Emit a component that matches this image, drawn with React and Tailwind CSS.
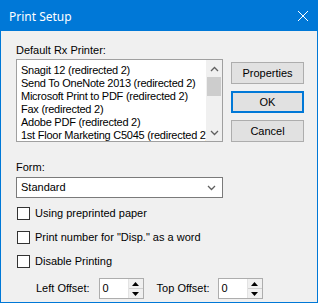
import React from "react";

const printers = [
  "Snagit 12 (redirected 2)",
  "Send To OneNote 2013 (redirected 2)",
  "Microsoft Print to PDF (redirected 2)",
  "Fax (redirected 2)",
  "Adobe PDF (redirected 2)",
  "1st Floor Marketing C5045 (redirected 2)",
];

const Chevron = ({ up }) => (
  <svg width="9" height="6" viewBox="0 0 9 6">
    <path
      d={up ? "M1 5 L4.5 1.5 L8 5" : "M1 1 L4.5 4.5 L8 1"}
      fill="none"
      stroke="#606060"
      strokeWidth="1.3"
    />
  </svg>
);

const CheckRow = ({ label }) => (
  <div className="flex items-center h-[13px] gap-[5px] pl-[1px]">
    <div className="w-[13px] h-[13px] border border-[#333333] bg-white shrink-0"></div>
    <span>{label}</span>
  </div>
);

const Spinner = () => (
  <div className="flex w-[45px] h-[21px] border border-[#adadad] bg-white">
    <div className="flex-1 pl-[3px] leading-[19px]">0</div>
    <div className="w-[15px] flex flex-col border-l border-[#e3e3e3] bg-[#f0f0f0]">
      <div className="flex-1 flex items-center justify-center border-b border-[#d0d0d0]">
        <svg width="7" height="4" viewBox="0 0 7 4">
          <path d="M0 4 L3.5 0 L7 4 Z" fill="#000" />
        </svg>
      </div>
      <div className="flex-1 flex items-center justify-center">
        <svg width="7" height="4" viewBox="0 0 7 4">
          <path d="M0 0 L3.5 4 L7 0 Z" fill="#000" />
        </svg>
      </div>
    </div>
  </div>
);

const Button = ({ children, primary }) => (
  <div
    className={
      "h-[22px] flex items-center justify-center bg-[#e1e1e1] " +
      (primary ? "border-2 border-[#0078d7]" : "border border-[#adadad]")
    }
  >
    {children}
  </div>
);

export default function App() {
  return (
    <div
      className="w-[318px] h-[303px] flex flex-col bg-[#f0f0f0] border border-[#0078d7] text-[11px] leading-[13px] text-black overflow-hidden"
      style={{ fontFamily: '"Liberation Sans", Arial, sans-serif' }}
    >
      {/* Title bar */}
      <div className="h-[30px] shrink-0 bg-[#0078d7] flex items-center justify-between pl-[8px] pr-[9px] text-white">
        <span className="text-[12px]" style={{ fontFamily: '"Noto Sans", sans-serif' }}>
          Print Setup
        </span>
        <svg width="10" height="10" viewBox="0 0 10 10">
          <path d="M0 0 L10 10 M10 0 L0 10" stroke="#fff" strokeWidth="1" />
        </svg>
      </div>

      <div className="flex flex-col pl-[15px] pt-[13px]">
        {/* Printer list + buttons */}
        <div className="flex gap-[8px]">
          <div className="w-[207px] flex flex-col">
            <span>Default Rx Printer:</span>
            <div className="mt-[2px] h-[83px] flex border border-[#a0a0a0] bg-white">
              <div className="flex-1 pl-[4px] pt-[4px] overflow-hidden whitespace-nowrap tracking-[-0.25px]">
                {printers.map((p) => (
                  <div key={p} className="h-[13px]">
                    {p}
                  </div>
                ))}
              </div>
              <div className="w-[16px] flex flex-col bg-[#f0f0f0]">
                <div className="h-[17px] flex items-center justify-center">
                  <Chevron up />
                </div>
                <div className="h-[19px] mx-[1px] bg-[#cdcdcd]"></div>
                <div className="flex-1"></div>
                <div className="h-[17px] flex items-center justify-center">
                  <Chevron />
                </div>
              </div>
            </div>
          </div>
          <div className="w-[73px] flex flex-col gap-[7px] pt-[18px]">
            <Button>Properties</Button>
            <Button primary>OK</Button>
            <Button>Cancel</Button>
          </div>
        </div>

        {/* Form */}
        <span className="mt-[19px]">Form:</span>
        <div className="mt-[3px] w-[207px] h-[21px] flex items-center justify-between border border-[#7a7a7a] bg-white pl-[4px] pr-[6px]">
          <span>Standard</span>
          <Chevron />
        </div>

        <div className="mt-[9px] flex flex-col gap-[11px]">
          <CheckRow label="Using preprinted paper" />
          <CheckRow label={'Print number for "Disp." as a word'} />
          <CheckRow label="Disable Printing" />
        </div>

        {/* Offsets */}
        <div className="mt-[10px] ml-[20px] flex items-center">
          <span>Left Offset:</span>
          <div className="ml-[9px]">
            <Spinner />
          </div>
          <span className="ml-[13px]">Top Offset:</span>
          <div className="ml-[8px]">
            <Spinner />
          </div>
        </div>
      </div>
    </div>
  );
}
